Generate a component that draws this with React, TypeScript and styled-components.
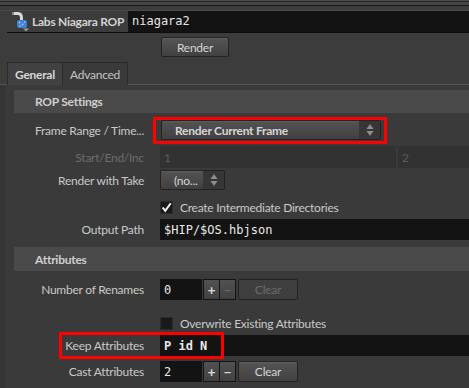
import React from 'react';
import styled, { createGlobalStyle } from 'styled-components';

const GlobalStyle = createGlobalStyle`
  html, body {
    margin: 0;
    padding: 0;
    background: #3c3c3c;
  }
  body {
    font-family: Lato, "Open Sans", sans-serif;
    font-size: 12px;
    letter-spacing: -0.25px;
    color: #cdcdcd;
    overflow: hidden;
  }
  * {
    box-sizing: border-box;
  }
`;

const Frame = styled.div`
  width: 469px;
  height: 388px;
  overflow: hidden;
  background: #3c3c3c;
`;

const TopStrip = styled.div`
  height: 11px;
  background: linear-gradient(
    to bottom,
    #4b4b4b 0 1px,
    #262626 1px 2px,
    #454545 2px 5px,
    #161616 5px 6px,
    #3d3d3d 6px 10px,
    #4a4a4a 10px 11px
  );
`;

const Header = styled.div`
  display: flex;
  align-items: center;
  height: 21px;
  padding-left: 10px;
`;

const IconBox = styled.div`
  width: 22px;
  height: 21px;
  display: flex;
`;

const Title = styled.div`
  width: 96px;
  font-weight: 700;
  color: #d2d2d2;
  white-space: nowrap;
`;

const NameField = styled.div`
  flex: 1;
  height: 21px;
  background: #131313;
  color: #e6e6e6;
  font-family: "DejaVu Sans Mono", monospace;
  font-size: 12px;
  letter-spacing: 0;
  line-height: 21px;
  padding-left: 4px;
`;

const HeaderRule = styled.div`
  height: 1px;
  margin-left: 7px;
  background: #0d0d0d;
`;

const RenderBar = styled.div`
  height: 29px;
  padding: 4px 0 0 161px;
`;

const PushButton = styled.div<{ $w: number; $off?: boolean }>`
  width: ${p => p.$w}px;
  height: 20px;
  display: flex;
  align-items: center;
  justify-content: center;
  border: 1px solid #232323;
  border-radius: 2px;
  background: ${p => (p.$off ? '#3f3f3f' : 'linear-gradient(#555555, #414141)')};
  box-shadow: ${p => (p.$off ? 'none' : 'inset 0 1px 0 #5e5e5e')};
  color: ${p => (p.$off ? '#6a6a6a' : '#d4d4d4')};
`;

const TabBar = styled.div`
  display: flex;
  height: 23px;
  padding-left: 7px;
  border-bottom: 1px solid #545454;
`;

const Tab = styled.div<{ $active?: boolean }>`
  height: 23px;
  display: flex;
  align-items: center;
  padding: 0 7px;
  border: 1px solid #2a2a2a;
  border-bottom: none;
  border-left: ${p => (p.$active ? '1px solid #2a2a2a' : 'none')};
  background: ${p => (p.$active ? '#414141' : '#3a3a3a')};
  font-weight: ${p => (p.$active ? 700 : 400)};
  color: ${p => (p.$active ? '#d6d6d6' : '#c4c4c4')};
  margin-bottom: ${p => (p.$active ? -1 : 0)}px;
`;

const PanelWrap = styled.div`
  background: #353535;
  padding-left: 5px;
  height: 303px;
`;

const Panel = styled.div`
  background: #3a3a3a;
  height: 100%;
  padding: 0 0 0 9px;
  overflow: hidden;
`;

const SectionHead = styled.div<{ $mt: number; $h: number }>`
  margin-top: ${p => p.$mt}px;
  height: ${p => p.$h}px;
  background: #4a4a4a;
  display: flex;
  align-items: center;
  padding-left: 21px;
  font-weight: 700;
  color: #cfcfcf;
`;

const Row = styled.div<{ $mt: number; $h: number }>`
  position: relative;
  margin-top: ${p => p.$mt}px;
  height: ${p => p.$h}px;
  display: flex;
  align-items: center;
  white-space: nowrap;
`;

const Label = styled.div<{ $dim?: boolean }>`
  width: 130px;
  flex-shrink: 0;
  margin-right: 16px;
  text-align: right;
  color: ${p => (p.$dim ? '#6c6c6c' : '#c9c9c9')};
`;

const Spacer = styled.div`
  width: 146px;
  flex: none;
`;

const Field = styled.div<{ $w?: number; $bold?: boolean }>`
  ${p => (p.$w ? `width: ${p.$w}px;` : 'flex: 1;')}
  flex-shrink: 0;
  height: 100%;
  background: #131313;
  color: #e8e8e8;
  font-family: "DejaVu Sans Mono", monospace;
  font-size: 12px;
  letter-spacing: 0;
  font-weight: ${p => (p.$bold ? 700 : 400)};
  display: flex;
  align-items: center;
  padding-left: 4px;
`;

const DimField = styled.div<{ $w: number }>`
  width: ${p => p.$w}px;
  flex-shrink: 0;
  height: 100%;
  background: #323232;
  color: #5c5c5c;
  display: flex;
  align-items: center;
  padding-left: 4px;
  margin-right: 2px;
`;

const Anchor = styled.div`
  position: relative;
  margin-left: 1px;
`;

const Select = styled.div<{ $w: number }>`
  width: ${p => p.$w}px;
  height: 20px;
  display: flex;
  border: 1px solid #222222;
  border-radius: 2px;
  background: linear-gradient(#535353, #404040);
  box-shadow: inset 0 1px 0 #5c5c5c;
  overflow: hidden;
`;

const SelectText = styled.div<{ $bold?: boolean }>`
  flex: 1;
  display: flex;
  align-items: center;
  padding-left: 13px;
  font-weight: ${p => (p.$bold ? 700 : 400)};
  color: #d6d6d6;
`;

const SelectArrows = styled.div`
  width: 21px;
  display: flex;
  align-items: center;
  justify-content: center;
  background: #363636;
`;

const Highlight = styled.div<{ $t: number; $r: number; $b: number; $l: number }>`
  position: absolute;
  top: ${p => p.$t}px;
  right: ${p => p.$r}px;
  bottom: ${p => p.$b}px;
  left: ${p => p.$l}px;
  border: 3px solid #ff0000;
  pointer-events: none;
`;

const CheckBox = styled.div`
  width: 13px;
  height: 13px;
  background: #1a1a1a;
  border: 1px solid #2b2b2b;
  display: flex;
  align-items: center;
  justify-content: center;
  margin-right: 7px;
`;

const CheckText = styled.div`
  color: #c9c9c9;
`;

const Stepper = styled.div`
  display: flex;
  height: 100%;
  margin: 0 2px 0 1px;
`;

const StepBtn = styled.div<{ $off?: boolean }>`
  width: 17px;
  height: 100%;
  display: flex;
  align-items: center;
  justify-content: center;
  border: 1px solid #141414;
  margin-left: -1px;
  background: linear-gradient(#515151, #414141);
  color: ${p => (p.$off ? '#666666' : '#d8d8d8')};
  font-weight: 700;
  font-size: 14px;
  &:first-child {
    margin-left: 0;
  }
`;

const ClearBtn = styled(PushButton)`
  height: 21px;
`;

const NodeIcon = () => (
  <svg width="22" height="21" viewBox="0 0 22 21">
    <path d="M3 2.5 L8 2.5 Q11.5 2.5 11.5 7 L11.5 11" fill="none" stroke="#d9d9d9" strokeWidth="3" />
    <rect x="2" y="1" width="2" height="3" fill="#8b8b8b" />
    <rect x="7" y="9" width="10" height="8" rx="2" fill="#3f7fd0" />
    <circle cx="9.5" cy="11.5" r="0.9" fill="#a9d0ff" />
    <circle cx="12.5" cy="13.5" r="0.9" fill="#a9d0ff" />
    <circle cx="14.5" cy="11" r="0.8" fill="#a9d0ff" />
    <circle cx="10" cy="15" r="0.8" fill="#a9d0ff" />
    <path d="M13 17.5 L19 17.5 L16 20.5 Z" fill="#9a9a9a" />
  </svg>
);

const UpDown = () => (
  <svg width="8" height="14" viewBox="0 0 8 14">
    <path d="M4 1 L7.5 6 L0.5 6 Z" fill="#8e8e8e" />
    <path d="M0.5 8 L7.5 8 L4 13 Z" fill="#8e8e8e" />
  </svg>
);

const Tick = () => (
  <svg width="13" height="13" viewBox="0 0 13 13">
    <path d="M2 6.5 L5 10.5 L11.5 1.5" fill="none" stroke="#f2f2f2" strokeWidth="2.4" />
  </svg>
);

const Minus = () => <span>&minus;</span>;

export default function App() {
  return (
    <Frame>
      <GlobalStyle />
      <TopStrip />
      <Header>
        <IconBox>
          <NodeIcon />
        </IconBox>
        <Title>Labs Niagara ROP</Title>
        <NameField>niagara2</NameField>
      </Header>
      <HeaderRule />
      <RenderBar>
        <PushButton $w={68}>Render</PushButton>
      </RenderBar>
      <TabBar>
        <Tab $active>General</Tab>
        <Tab>Advanced</Tab>
      </TabBar>
      <PanelWrap>
        <Panel>
          <SectionHead $mt={5} $h={23}>ROP Settings</SectionHead>

          <Row $mt={7} $h={20}>
            <Label>Frame Range / Time...</Label>
            <Anchor>
              <Select $w={220}>
                <SelectText $bold>Render Current Frame</SelectText>
                <SelectArrows>
                  <UpDown />
                </SelectArrows>
              </Select>
              <Highlight $t={-3} $r={-6} $b={-4} $l={-8} />
            </Anchor>
          </Row>

          <Row $mt={6} $h={22}>
            <Label $dim>Start/End/Inc</Label>
            <DimField $w={236}>1</DimField>
            <DimField $w={236}>2</DimField>
          </Row>

          <Row $mt={2} $h={20}>
            <Label>Render with Take</Label>
            <Select $w={65}>
              <SelectText>(no...</SelectText>
              <SelectArrows>
                <UpDown />
              </SelectArrows>
            </Select>
          </Row>

          <Row $mt={7} $h={20}>
            <Spacer />
            <CheckBox>
              <Tick />
            </CheckBox>
            <CheckText>Create Intermediate Directories</CheckText>
          </Row>

          <Row $mt={2} $h={21}>
            <Label>Output Path</Label>
            <Field>$HIP/$OS.hbjson</Field>
          </Row>

          <SectionHead $mt={7} $h={24}>Attributes</SectionHead>

          <Row $mt={8} $h={21}>
            <Label>Number of Renames</Label>
            <Field $w={42}>0</Field>
            <Stepper>
              <StepBtn>+</StepBtn>
              <StepBtn $off>
                <Minus />
              </StepBtn>
            </Stepper>
            <ClearBtn $w={60} $off>
              Clear
            </ClearBtn>
          </Row>

          <Row $mt={13} $h={20}>
            <Spacer />
            <CheckBox />
            <CheckText>Overwrite Existing Attributes</CheckText>
          </Row>

          <Row $mt={2} $h={21}>
            <Label>Keep Attributes</Label>
            <Field $bold>P id N</Field>
            <Highlight $t={-3} $r={245} $b={-3} $l={45} />
          </Row>

          <Row $mt={5} $h={21}>
            <Label>Cast Attributes</Label>
            <Field $w={42}>2</Field>
            <Stepper>
              <StepBtn>+</StepBtn>
              <StepBtn>
                <Minus />
              </StepBtn>
            </Stepper>
            <ClearBtn $w={60}>Clear</ClearBtn>
          </Row>
        </Panel>
      </PanelWrap>
    </Frame>
  );
}
